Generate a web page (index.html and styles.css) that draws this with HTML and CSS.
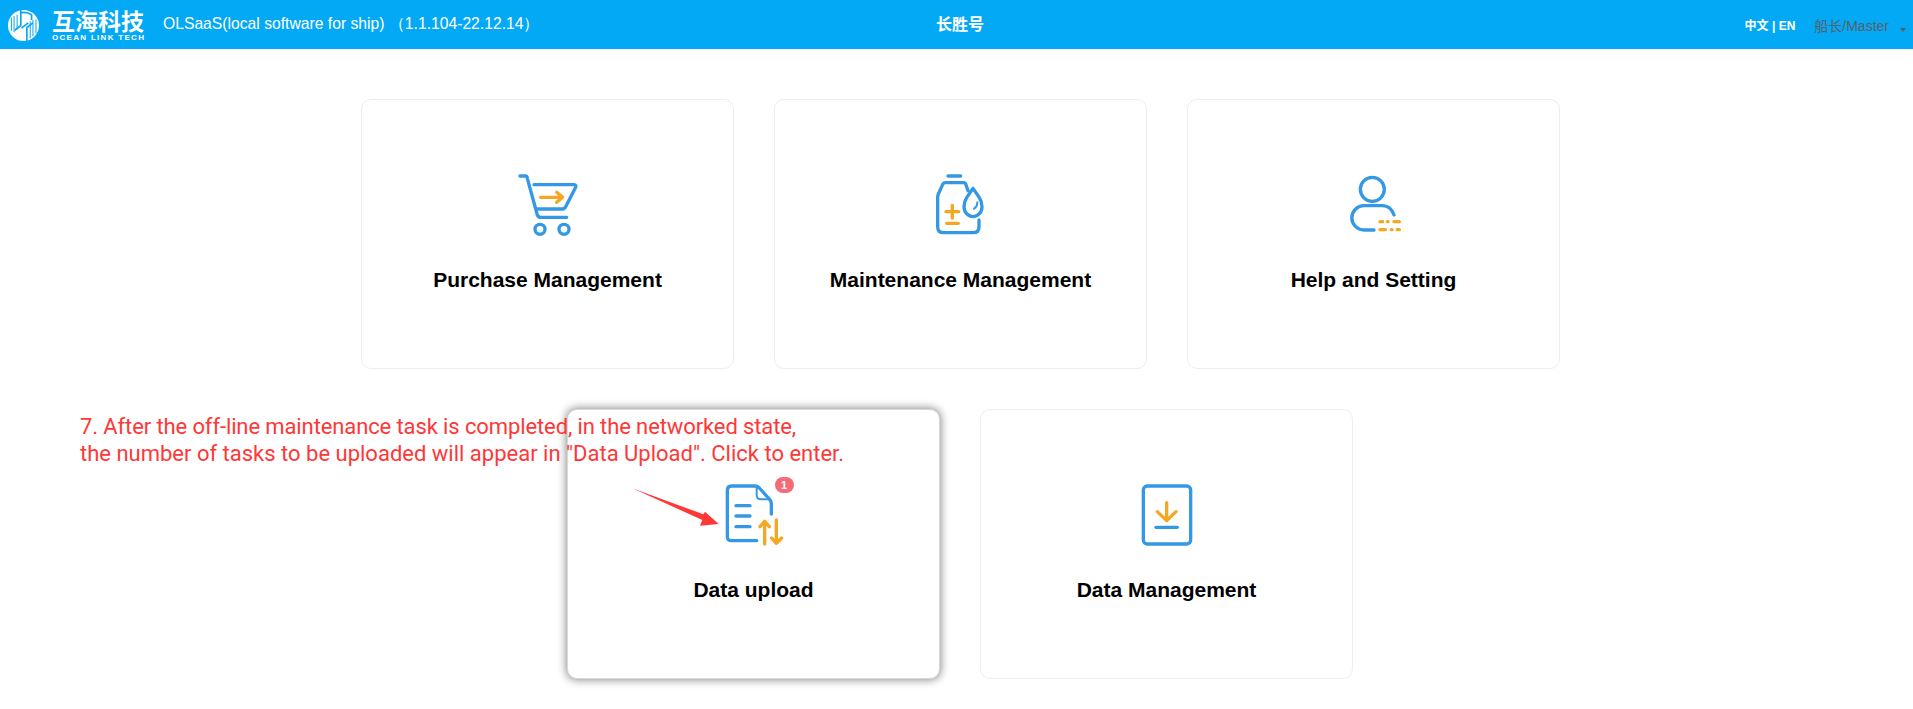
FILE: index.html
```html
<!DOCTYPE html>
<html lang="en">
<head>
<meta charset="utf-8">
<title>OLSaaS</title>
<link rel="stylesheet" href="styles.css">
</head>
<body>
<header class="topbar">
  <div class="brand">
    <svg class="brand-mark" viewBox="0 0 92 92" width="31" height="31">
      <circle cx="46" cy="46" r="46" fill="#fff"/>
      <g class="mark-lines">
        <path d="M10 22V62M18 18V66M27 14V58"/>
        <path d="M66 34V84M74 30V78M83 28V70"/>
      </g>
      <g class="mark-band">
        <path d="M38 0V46L20 60"/>
        <path d="M56 92V52L74 38"/>
        <path d="M40 54L60 38"/>
        <path d="M38 8Q56 4 70 14V30"/>
      </g>
    </svg>
    <div class="brand-words">
      <span class="brand-cn">互海科技</span>
      <span class="brand-en">OCEAN LINK TECH</span>
    </div>
    <span class="app-title">OLSaaS(local software for ship)&nbsp;（1.1.104-22.12.14）</span>
  </div>
  <div class="ship">长胜号</div>
  <div class="user-area">
    <span class="lang">中文 | EN</span>
    <span class="user">船长/Master</span>
    <span class="caret"></span>
  </div>
</header>

<main class="board">
  <div class="row">
    <a class="card">
      <svg class="icon" viewBox="37 0 270 270" width="90" height="90">
        <path class="blue" d="M88 48H105Q109 48 110 55L140 165Q143 172 150 172H228"/>
        <path class="blue" d="M130 74H250Q258 75 255 82L225 140Q222 147 215 147H137"/>
        <circle class="blue" cx="148" cy="208" r="15"/>
        <circle class="blue" cx="220" cy="208" r="15"/>
        <path class="orange" d="M150 112H215M198 97L216 112L198 127"/>
      </svg>
      <span class="card-label">Purchase Management</span>
    </a>
    <a class="card">
      <svg class="icon" viewBox="16 0 270 270" width="90" height="90">
        <path class="blue" d="M112 48H150"/>
        <path class="blue" d="M172 92L165 72Q164 68 158 68H104Q99 68 96 73L84 100Q81 106 81 112V200Q81 218 99 218H187Q205 218 205 200V180"/>
        <path class="blue" d="M187 85L168 113Q160 125 160 140A27 30 0 0 0 214 140Q214 125 206 113Z"/>
        <path class="blue thin" d="M200 127Q200 140 190 146"/>
        <path class="orange" d="M106 155H144M125 136V174M108 190H143"/>
      </svg>
      <span class="card-label">Maintenance Management</span>
    </a>
    <a class="card">
      <svg class="icon" viewBox="-5 0 270 270" width="90" height="90">
        <circle class="blue" cx="125" cy="88" r="36"/>
        <path class="blue" d="M190 165Q180 137 155 137H100A36.500 36.500 0 0 0 100 210H130"/>
        <path class="orange" d="M148 185H156M170 185H172M190 185H206M148 209H164M182 209H184M200 209H206"/>
      </svg>
      <span class="card-label">Help and Setting</span>
    </a>
  </div>
  <div class="row row-lower">
    <a class="card card-active">
      <span class="icon-wrap">
        <svg class="icon" viewBox="267 30 270 270" width="90" height="90">
          <path class="blue" d="M410 242H335Q322 242 322 230V92Q322 78 335 78H405Q412 78 418 84L448 117Q454 123 454 130V162"/>
          <path class="blue thin" d="M410 85V105Q410 118 423 118H450"/>
          <path class="blue" d="M348 137H390M348 168H390M348 200H390"/>
          <path class="orange" d="M434 252V184M420 200L434 184L448 200M469 180V250M455 234L469 250L485 234"/>
        </svg>
        <span class="badge">1</span>
      </span>
      <span class="card-label">Data upload</span>
    </a>
    <a class="card">
      <svg class="icon" viewBox="6 0 270 270" width="90" height="90">
        <rect class="blue" x="70" y="48" width="142" height="174" rx="12"/>
        <path class="orange" d="M140 98V152M112 125L140 152L168 125"/>
        <path class="blue" d="M108 172H172"/>
      </svg>
      <span class="card-label">Data Management</span>
    </a>
  </div>
</main>

<p class="note"><span class="note-first">7. After the off-line maintenance task is completed, in the networked state,</span><br>the number of tasks to be uploaded will appear in "Data Upload". Click to enter.</p>
<svg class="pointer" viewBox="0 0 90 40" width="90" height="40">
  <path d="M0 -1.500L70.300 24.300L72 21.700L85.700 34L67 35.700L69.300 30Z" fill="#ff3737"/>
</svg>
</body>
</html>
```
FILE: styles.css
```css
* { box-sizing: border-box; }
html, body { margin: 0; padding: 0; }
body {
  position: relative;
  height: 709px;
  overflow: hidden;
  background: #fff;
  font-family: "Liberation Sans", Arial, sans-serif;
  color: #000;
}
.topbar {
  position: relative;
  display: flex;
  align-items: center;
  justify-content: space-between;
  height: 49px;
  background: #04a9f5;
  color: #fff;
}
.brand { display: flex; align-items: center; padding-left: 8px; }
.brand-mark { display: block; margin: 1px 13px 0 0; }
.mark-lines path { fill: none; stroke: #04a9f5; stroke-width: 3; }
.mark-band path { fill: none; stroke: #04a9f5; stroke-width: 5; }
.brand-words { display: flex; flex-direction: column; width: 92px; margin-right: 19px; }
.brand-cn {
  font-family: "Noto Sans CJK SC", sans-serif;
  font-size: 23px;
  font-weight: 700;
  line-height: 25px;
  white-space: nowrap;
}
.brand-en {
  font-size: 8px;
  font-weight: 700;
  line-height: 9px;
  letter-spacing: 1.300px;
  white-space: nowrap;
}
.app-title { font-size: 15.700px; white-space: nowrap; }
.ship {
  position: absolute;
  left: 936px;
  top: 13px;
  font-family: "Noto Sans CJK SC", sans-serif;
  font-size: 16px;
  font-weight: 700;
  line-height: 20px;
}
.user-area { display: flex; align-items: center; padding-right: 7px; }
.lang {
  font-family: "Liberation Sans", "Noto Sans CJK SC", sans-serif;
  font-size: 12px;
  font-weight: 700;
  margin-right: 19px;
}
.user {
  font-family: "Liberation Sans", "Noto Sans CJK SC", sans-serif;
  font-size: 14px;
  color: #55626a;
}
.caret {
  width: 0;
  height: 0;
  margin: 10px 0 0 11px;
  border-left: 3.500px solid transparent;
  border-right: 3.500px solid transparent;
  border-top: 4px solid #55626a;
}
.board { display: flex; flex-direction: column; gap: 40px; padding: 50px 0 0 8px; }
.row { display: flex; justify-content: center; gap: 40px; }
.row-lower { padding-right: 1px; }
.card {
  display: flex;
  flex-direction: column;
  align-items: center;
  width: 373px;
  height: 270px;
  padding-top: 60px;
  background: #fff;
  border: 1px solid #ebeef0;
  border-radius: 10px;
}
.card-active {
  border-color: #d8d8d8;
  box-shadow: 0 0 8px 1px rgba(0, 0, 0, .45);
}
.icon-wrap { position: relative; display: block; }
.icon { display: block; overflow: visible; }
.blue, .orange {
  fill: none;
  stroke-width: 10;
  stroke-linecap: round;
  stroke-linejoin: round;
}
.blue { stroke: #3498e4; }
.orange { stroke: #f5a623; }
.thin { stroke-width: 6; }
.card-label {
  margin-top: 18px;
  font-size: 21px;
  font-weight: 700;
  line-height: 24px;
}
.badge {
  position: absolute;
  left: 66px;
  top: 7px;
  width: 19px;
  height: 16px;
  border-radius: 8px;
  background: #f56c78;
  color: #fff;
  font-size: 11px;
  font-weight: 700;
  line-height: 16px;
  text-align: center;
}
.note {
  position: absolute;
  left: 80px;
  top: 413px;
  margin: 0;
  font-family: Roboto, sans-serif;
  font-size: 22px;
  line-height: 27px;
  color: #ff3737;
  white-space: nowrap;
}
.note-first { letter-spacing: -.11px; }
.pointer { position: absolute; left: 633px; top: 490px; overflow: visible; }
```
